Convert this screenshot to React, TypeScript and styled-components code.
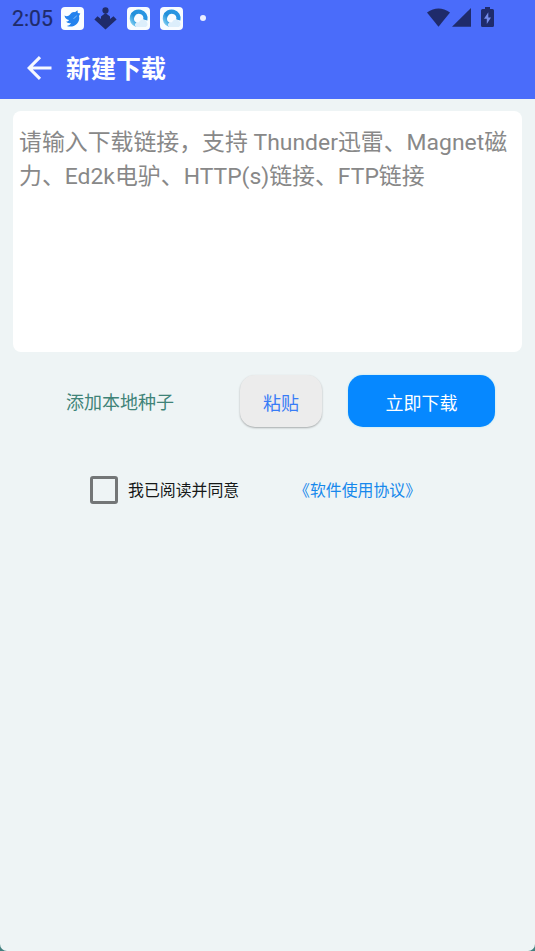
import React from "react";
import styled, { createGlobalStyle } from "styled-components";

const GlobalStyle = createGlobalStyle`
  * { box-sizing: border-box; }
  html, body { margin: 0; padding: 0; background: #43807f; }
  body { font-family: Roboto, "Noto Sans CJK SC", sans-serif; }
  button, textarea, input { font-family: inherit; }
`;

const Screen = styled.div`
  display: flex;
  flex-direction: column;
  width: 535px;
  height: 951px;
  overflow: hidden;
  background: #eef4f5;
  border-radius: 0 0 7px 7px;
`;

const Header = styled.header`
  height: 99px;
  background: #4a6cfa;
`;

const StatusBar = styled.div`
  display: flex;
  align-items: center;
  height: 36px;
  padding: 0 41px 0 12px;
  color: #1f2b6b;
`;

const Clock = styled.span`
  width: 49px;
  padding-top: 1px;
  font-size: 21.2px;
  line-height: 36px;
  -webkit-text-stroke: 0.2px #1f2b6b;
  white-space: nowrap;
`;

const StatusIcon = styled.svg<{ $gap?: number }>`
  flex: none;
  display: block;
  margin-left: ${(p) => p.$gap ?? 0}px;
`;

const Dot = styled.span`
  width: 6px;
  height: 6px;
  margin-left: 17px;
  border-radius: 50%;
  background: #e9edff;
`;

const Spacer = styled.span`
  flex: 1;
`;

const SystemIcons = styled.span`
  display: flex;
  align-items: flex-end;
  height: 20px;
  margin-bottom: 2px;
`;

const TitleBar = styled.div`
  display: flex;
  align-items: center;
  height: 63px;
  padding-left: 27px;
`;

const BackButton = styled.button`
  display: flex;
  width: 25px;
  height: 63px;
  align-items: center;
  margin: 0 14px 0 0;
  padding: 0;
  border: 0;
  background: none;
`;

const Title = styled.h1`
  margin: 0;
  padding-top: 4px;
  color: #fff;
  font-size: 25px;
  font-weight: 700;
  line-height: 60px;
`;

const LinkInput = styled.textarea`
  display: block;
  width: 509px;
  height: 241px;
  margin: 12px 0 0 12.5px;
  padding: 15px 6.5px;
  border: 0;
  border-radius: 8px;
  outline: 0;
  resize: none;
  background: #fff;
  color: #333;
  font-size: 22.9px;
  line-height: 34px;
  &::placeholder { color: #888; opacity: 1; }
`;

const Actions = styled.div`
  display: flex;
  align-items: center;
  height: 52px;
  margin: 23px 40px 0 66px;
`;

const SeedLink = styled.a`
  width: 174px;
  padding-top: 4px;
  color: #3f8378;
  font-size: 18px;
  line-height: 48px;
`;

const ActionButton = styled.button<{ $primary?: boolean }>`
  width: ${(p) => (p.$primary ? 147 : 82)}px;
  height: 52px;
  margin: 0 0 0 ${(p) => (p.$primary ? 26 : 0)}px;
  padding: 6px 0 0;
  border: 0;
  border-radius: 15px;
  background: ${(p) => (p.$primary ? "#0688ff" : "#ececec")};
  color: ${(p) => (p.$primary ? "#fff" : "#397cf6")};
  font-size: 18px;
  line-height: 26px;
  box-shadow: ${(p) =>
    p.$primary ? "0 0 2px rgba(120, 220, 245, 0.6)" : "0 1px 2px rgba(0, 0, 0, 0.3)"};
`;

const Agreement = styled.div`
  display: flex;
  align-items: center;
  height: 28px;
  margin: 49px 0 0 90px;
`;

const Checkbox = styled.input`
  appearance: none;
  width: 28px;
  height: 28px;
  margin: 0 10px 0 0;
  border: 3px solid #737677;
  border-radius: 3px;
`;

const AgreementLabel = styled.label`
  width: 166px;
  padding-top: 2px;
  color: #151818;
  font-size: 15.9px;
  line-height: 28px;
`;

const AgreementLink = styled.a`
  padding-top: 2px;
  color: #1688ec;
  font-size: 15.9px;
  line-height: 28px;
`;

const BirdIcon = () => (
  <StatusIcon width="23" height="23" viewBox="0 0 23 23">
    <rect width="23" height="23" rx="4" fill="#fafdff" />
    <path
      d="M3.500 8.500C5.500 9.600 7.500 9.300 9 7.500 10.500 5.200 12.500 4.600 14 5.200L16.500 3.200 16.800 6 19.300 6.500 18 9C18.800 11.500 18 14.500 16 16.700 13.200 19.600 9 20.300 5.800 18.900 8 18.500 9.500 17.600 10 16 7.800 16.600 6 15.800 5.200 14.500 6.700 14.600 7.600 14 8 13 5.500 12.800 3.800 11 3.500 8.500Z"
      fill="#2282ee"
    />
    <path d="M12.500 11.500C14 11 15 10 15.600 8.600" stroke="#8cc5fb" strokeWidth="0.9" fill="none" />
  </StatusIcon>
);

const DownloadIcon = () => (
  <StatusIcon $gap={10} width="23" height="23" viewBox="0 0 23 23">
    <circle cx="11.500" cy="3.400" r="3.100" fill="currentColor" />
    <path
      d="M7 9.500 11.500 6 16 9.500V12L19.500 9.300 22.600 12.400 11.500 22.500 0.400 12.400 3.500 9.300 7 12Z"
      fill="currentColor"
    />
  </StatusIcon>
);

const BrowserIcon = ({ id, gap }: { id: string; gap: number }) => (
  <StatusIcon $gap={gap} width="23" height="23" viewBox="0 0 23 23">
    <defs>
      <linearGradient id={id} x1="0" y1="0.9" x2="0.9" y2="0.2">
        <stop offset="0" stopColor="#9be1f8" />
        <stop offset="0.45" stopColor="#2190da" />
        <stop offset="1" stopColor="#2b97e4" />
      </linearGradient>
    </defs>
    <rect width="23" height="23" rx="4" fill="#f8fcff" />
    <path
      d="M9 20A9 9 0 1 1 20.400 13.500L16.200 12.500A4.600 4.600 0 1 0 9.500 15.500Z"
      fill={`url(#${id})`}
    />
    <path
      d="M9 20C6.500 17.500 9 14.500 12 15.500 13 11.500 18.500 11.500 19.800 15 21.500 17.500 20 20 18 20Z"
      fill="#dceefb"
    />
  </StatusIcon>
);

export default function App() {
  return (
    <>
      <GlobalStyle />
      <Screen>
        <Header>
          <StatusBar>
            <Clock>2:05</Clock>
            <BirdIcon />
            <DownloadIcon />
            <BrowserIcon id="ring-a" gap={10} />
            <BrowserIcon id="ring-b" gap={10} />
            <Dot />
            <Spacer />
            <SystemIcons>
              <StatusIcon width="23" height="19" viewBox="0 0 23 19">
                <path d="M0 4.600Q11.500-3.800 23 4.600L11.500 18.700Z" fill="currentColor" />
              </StatusIcon>
              <StatusIcon $gap={2} width="19" height="19" viewBox="0 0 19 19">
                <path d="M19 0V18.700H0Z" fill="currentColor" />
              </StatusIcon>
              <StatusIcon $gap={10} width="13" height="20" viewBox="0 0 13 20">
                <path
                  d="M4 0H9V2H11.500Q13 2 13 3.500V18.500Q13 20 11.500 20H1.500Q0 20 0 18.500V3.500Q0 2 1.500 2H4Z"
                  fill="currentColor"
                />
                <path d="M7.300 5.200 3 11.800H5.800V17L10 10.400H7.300Z" fill="#748bea" />
              </StatusIcon>
            </SystemIcons>
          </StatusBar>
          <TitleBar>
            <BackButton aria-label="返回">
              <svg width="25" height="24" viewBox="0 0 25 24" fill="none" stroke="#f5f8ff" strokeWidth="3.100">
                <path d="M24.500 12H2.500M13 1.200 2.200 12 13 22.800" />
              </svg>
            </BackButton>
            <Title>新建下载</Title>
          </TitleBar>
        </Header>
        <LinkInput placeholder="请输入下载链接，支持 Thunder迅雷、Magnet磁力、Ed2k电驴、HTTP(s)链接、FTP链接" />
        <Actions>
          <SeedLink>添加本地种子</SeedLink>
          <ActionButton>粘贴</ActionButton>
          <ActionButton $primary>立即下载</ActionButton>
        </Actions>
        <Agreement>
          <Checkbox type="checkbox" id="agree" />
          <AgreementLabel htmlFor="agree">我已阅读并同意</AgreementLabel>
          <AgreementLink>《软件使用协议》</AgreementLink>
        </Agreement>
      </Screen>
    </>
  );
}
